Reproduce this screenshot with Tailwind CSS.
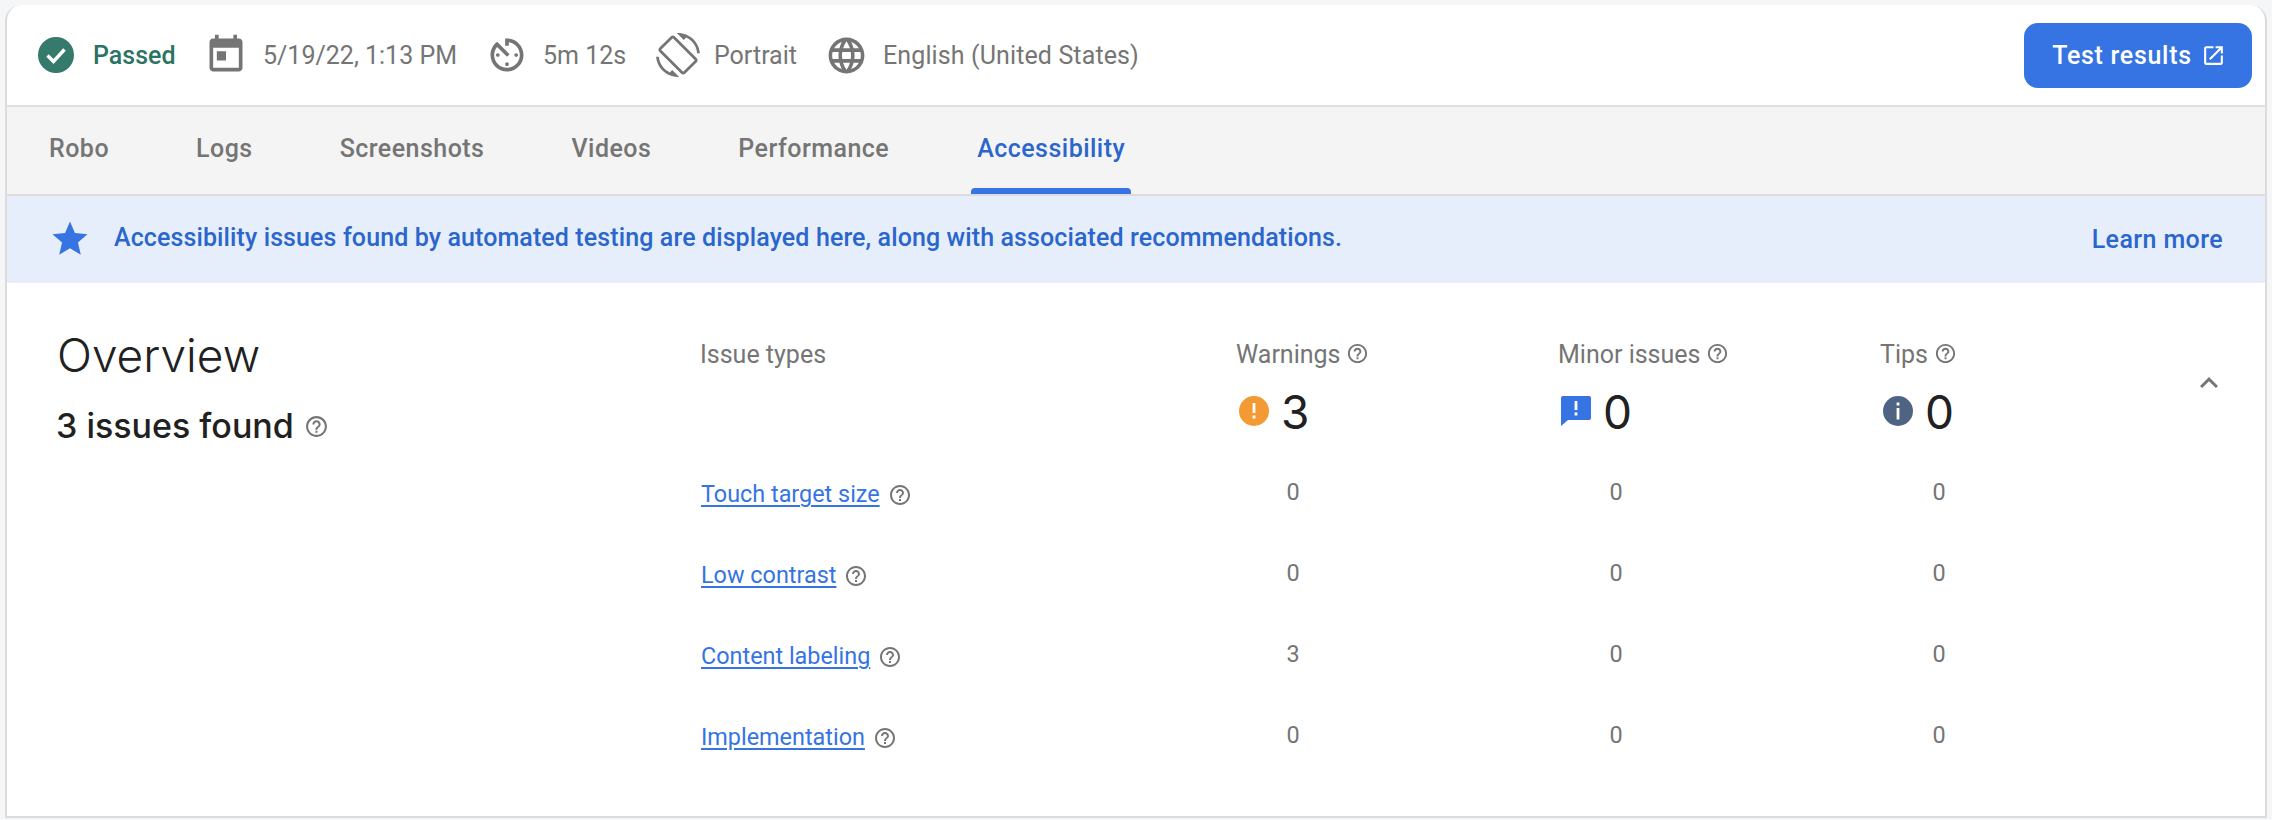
<!DOCTYPE html>
<html lang="en">
<head>
  <meta charset="UTF-8" />
  <title>Accessibility</title>
  <script src="https://cdn.jsdelivr.net/npm/@tailwindcss/browser@4"></script>
</head>
<body class="h-[820px] overflow-hidden bg-[#f5f6f7] px-[5px] pt-[5px] font-['Roboto',sans-serif] text-[#757575]">
  <svg class="hidden">
    <symbol id="help" viewBox="0 0 24 24"><path d="M11 18h2v-2h-2v2zm1-16C6.48 2 2 6.48 2 12s4.48 10 10 10 10-4.48 10-10S17.52 2 12 2zm0 18c-4.41 0-8-3.59-8-8s3.59-8 8-8 8 3.59 8 8-3.59 8-8 8zm0-14c-2.21 0-4 1.79-4 4h2c0-1.1.9-2 2-2s2 .9 2 2c0 2-3 1.75-3 5h2c0-2.25 3-2.5 3-5 0-2.21-1.79-4-4-4z"/></symbol>
  </svg>

  <div class="h-[813px] rounded-t-[16px] bg-white border-x-2 border-b-2 border-[#dcdcdc] border-t-0 overflow-hidden">
    <!-- header -->
    <div class="h-[102px] flex items-center pl-[31px] pr-[13px] border-b-2 border-[#e0e0e0] text-[25px]">
      <svg class="w-[36px] h-[36px] mr-[19px]" viewBox="0 0 36 36"><circle cx="18" cy="18" r="18" fill="#357a6a"/><path d="M9.5 18.5l6 6 11-12" fill="none" stroke="#fff" stroke-width="3.4"/></svg>
      <span class="pt-[2px] font-medium text-[#2b7363] w-[81px]">Passed</span>
      <svg class="w-[44px] h-[44px] ml-[30px] mr-[15px] fill-[#757575]" viewBox="0 0 24 24"><path d="M19 3h-1V1h-2v2H8V1H6v2H5c-1.11 0-1.99.9-1.99 2L3 19c0 1.1.89 2 2 2h14c1.1 0 2-.9 2-2V5c0-1.1-.9-2-2-2zm0 16H5V8h14v11zM7 10h5v5H7z"/></svg>
      <span class="pt-[2px] w-[193px] whitespace-nowrap">5/19/22, 1:13 PM</span>
      <svg class="w-[44px] h-[44px] ml-[29px] mr-[14px] fill-[#757575]" viewBox="0 0 24 24"><path d="M11 17c0 .55.45 1 1 1s1-.45 1-1-.45-1-1-1-1 .45-1 1zm0-14v4h2V5.08c3.39.49 6 3.39 6 6.92 0 3.87-3.13 7-7 7s-7-3.13-7-7c0-1.68.59-3.22 1.58-4.4L12 13l1.41-1.41-6.8-6.8v.02C4.42 6.45 3 9.05 3 12c0 4.97 4.02 9 9 9 4.97 0 9-4.03 9-9s-4.03-9-9-9h-1zm7 9c0-.55-.45-1-1-1s-1 .45-1 1 .45 1 1 1 1-.45 1-1zM6 12c0 .55.45 1 1 1s1-.45 1-1-.45-1-1-1-1 .45-1 1z"/></svg>
      <span class="pt-[2px] w-[83px] whitespace-nowrap">5m 12s</span>
      <svg class="w-[44px] h-[44px] ml-[30px] mr-[14px] fill-[#757575]" viewBox="0 0 24 24"><path d="M16.48 2.52c3.27 1.55 5.61 4.72 5.97 8.48h1.5C23.44 4.84 18.29 0 12 0l-.66.03 3.81 3.81 1.33-1.32zm-6.25-.77c-.59-.59-1.54-.59-2.12 0L1.75 8.11c-.59.59-.59 1.54 0 2.12l12.02 12.02c.59.59 1.54.59 2.12 0l6.36-6.36c.59-.59.59-1.54 0-2.12L10.23 1.75zm4.6 19.44L2.81 9.17l6.36-6.36 12.02 12.02-6.36 6.36zm-7.31.29C4.25 19.94 1.91 16.76 1.55 13H.05C.56 19.16 5.71 24 12 24l.66-.03-3.81-3.81-1.33 1.32z"/></svg>
      <span class="pt-[2px] w-[83px]">Portrait</span>
      <svg class="w-[43px] h-[43px] ml-[28px] mr-[15px] fill-[#757575]" viewBox="0 0 24 24"><path d="M11.99 2C6.47 2 2 6.48 2 12s4.47 10 9.99 10C17.52 22 22 17.52 22 12S17.52 2 11.99 2zm6.93 6h-2.95c-.32-1.25-.78-2.45-1.38-3.56 1.84.63 3.37 1.91 4.33 3.56zM12 4.04c.83 1.2 1.48 2.53 1.91 3.96h-3.82c.43-1.43 1.08-2.76 1.91-3.96zM4.26 14C4.1 13.36 4 12.69 4 12s.1-1.36.26-2h3.38c-.08.66-.14 1.32-.14 2 0 .68.06 1.34.14 2H4.26zm.82 2h2.95c.32 1.25.78 2.45 1.38 3.56-1.84-.63-3.37-1.9-4.33-3.56zm2.95-8H5.08c.96-1.66 2.49-2.93 4.33-3.56C8.81 5.55 8.35 6.75 8.03 8zM12 19.96c-.83-1.2-1.48-2.53-1.91-3.96h3.82c-.43 1.43-1.08 2.76-1.91 3.96zM14.34 14H9.66c-.09-.66-.16-1.32-.16-2 0-.68.07-1.35.16-2h4.68c.09.65.16 1.32.16 2 0 .68-.07 1.34-.16 2zm.25 5.56c.6-1.11 1.06-2.31 1.38-3.56h2.95c-.96 1.65-2.49 2.93-4.33 3.56zM16.36 14c.08-.66.14-1.32.14-2 0-.68-.06-1.34-.14-2h3.38c.16.64.26 1.31.26 2s-.1 1.36-.26 2h-3.38z"/></svg>
      <span class="pt-[2px] whitespace-nowrap tracking-[0.12px]">English (United States)</span>
      <a class="ml-auto w-[228px] h-[65px] rounded-[14px] bg-[#3574e2] text-white flex items-center justify-center gap-[9px] pl-[2px] font-medium tracking-[0.7px]">
        <span class="pt-[2px]">Test results</span>
        <svg class="w-[25px] h-[25px] fill-white" viewBox="0 0 24 24"><path d="M19 19H5V5h7V3H5c-1.11 0-2 .9-2 2v14c0 1.1.89 2 2 2h14c1.1 0 2-.9 2-2V12h-2v7zM14 3v2h3.59l-9.83 9.83 1.41 1.41L19 6.41V10h2V3h-7z"/></svg>
      </a>
    </div>

    <!-- tabs -->
    <div class="h-[89px] bg-[#f4f4f4] border-b-2 border-[#dcdcdc] flex pl-[36px] gap-[75px] text-[25px] font-medium tracking-[0.47px]">
      <a class="px-[6px] flex items-center -mt-[4px]">Robo</a>
      <a class="px-[6px] flex items-center -mt-[4px]">Logs</a>
      <a class="px-[6px] flex items-center -mt-[4px]">Screenshots</a>
      <a class="px-[6px] flex items-center -mt-[4px]">Videos</a>
      <a class="px-[6px] flex items-center -mt-[4px]">Performance</a>
      <a class="relative ml-[1px] px-[6px] flex items-center -mt-[4px] text-[#2a66cc]">Accessibility
        <span class="absolute left-0 right-0 bottom-0 h-[6px] rounded-t-[4px] bg-[#3574e2]"></span>
      </a>
    </div>

    <!-- banner -->
    <div class="h-[87px] bg-[#e6eefb] flex items-center pl-[42px] pr-[42px] text-[#2a66cc] font-medium text-[25px]">
      <svg class="w-[42px] h-[42px] fill-[#3574e2] mr-[23px] -mt-[2px]" viewBox="0 0 24 24"><path d="M12 17.27L18.18 21l-1.64-7.03L22 9.24l-7.19-.61L12 2 9.19 8.63 2 9.24l5.46 4.73L5.82 21z"/></svg>
      <span class="-mt-[4px] tracking-[0.11px]">Accessibility issues found by automated testing are displayed here, along with associated recommendations.</span>
      <a class="ml-auto tracking-[0.4px]">Learn more</a>
    </div>

    <!-- overview -->
    <div class="flex pl-[50px] pt-[32px]">
      <div class="w-[643px]">
        <h2 class="mt-[10px] font-['Inter',sans-serif] font-light text-[46px] leading-[60px] text-[#212121]">Overview</h2>
        <div class="mt-[17px] flex items-center gap-[10px] text-[#212121]">
          <span class="-ml-[1px] font-['Inter',sans-serif] font-medium text-[34px] leading-[48px]">3 issues found</span>
          <svg class="w-[25px] h-[25px] fill-[#757575]"><use href="#help"/></svg>
        </div>
      </div>

      <div class="w-[1500px]">
        <div class="pt-[17px] grid grid-cols-[536px_322px_322px_auto] text-[25px]">
          <div class="pt-[4px]">Issue types</div>
          <div class="pt-[7px] flex items-center gap-[6px] h-[39px]">Warnings <svg class="w-[23px] h-[23px] fill-[#757575] -mt-[4px]"><use href="#help"/></svg></div>
          <div class="pt-[7px] flex items-center gap-[6px] h-[39px]">Minor issues <svg class="w-[23px] h-[23px] fill-[#757575] -mt-[4px]"><use href="#help"/></svg></div>
          <div class="pt-[7px] flex items-center gap-[6px] h-[39px]">Tips <svg class="w-[23px] h-[23px] fill-[#757575] -mt-[4px]"><use href="#help"/></svg></div>

          <div></div>
          <div class="flex items-center h-[60px] mt-[9px] text-[#212121] text-[46px] font-['Inter',sans-serif]">
            <svg class="w-[30px] h-[30px] ml-[3px] mr-[12px] -mt-[3px]" viewBox="0 0 30 30"><circle cx="15" cy="15" r="15" fill="#f39a35"/><path d="M13.6 7h2.8v10h-2.8zM13.6 19.5h2.8v3h-2.8z" fill="#fff"/></svg>3
          </div>
          <div class="flex items-center h-[60px] mt-[9px] text-[#212121] text-[46px] font-['Inter',sans-serif]">
            <svg class="w-[30px] h-[30px] ml-[3px] mr-[12px] -mt-[4px]" viewBox="0 0 30 30"><path d="M2 0h26a2 2 0 0 1 2 2v20a2 2 0 0 1-2 2H7l-7 6V2a2 2 0 0 1 2-2z" fill="#3574e2"/><path d="M13.6 5h2.8v9h-2.8zM13.6 16.5h2.8v3h-2.8z" fill="#fff"/></svg>0
          </div>
          <div class="flex items-center h-[60px] mt-[9px] text-[#212121] text-[46px] font-['Inter',sans-serif]">
            <svg class="w-[30px] h-[30px] ml-[3px] mr-[12px] -mt-[3px]" viewBox="0 0 30 30"><circle cx="15" cy="15" r="15" fill="#4f6482"/><path d="M13.6 6.5h2.8v3h-2.8zM13.6 12h2.8v11.5h-2.8z" fill="#fff"/></svg>0
          </div>
        </div>

        <div class="mt-[12px] pl-[1px] grid grid-cols-[536px_323px_323px_auto] auto-rows-[81px] items-center text-[23.4px]">
          <div class="flex items-center gap-[8px]"><a class="text-[#3574e2] underline underline-offset-[3px]">Touch target size</a><svg class="w-[24px] h-[24px] fill-[#757575]"><use href="#help"/></svg></div>
          <div class="w-[112px] text-center pb-[5px]">0</div><div class="w-[112px] text-center pb-[5px]">0</div><div class="w-[112px] text-center pb-[5px]">0</div>
          <div class="flex items-center gap-[8px]"><a class="text-[#3574e2] underline underline-offset-[3px]">Low contrast</a><svg class="w-[24px] h-[24px] fill-[#757575]"><use href="#help"/></svg></div>
          <div class="w-[112px] text-center pb-[5px]">0</div><div class="w-[112px] text-center pb-[5px]">0</div><div class="w-[112px] text-center pb-[5px]">0</div>
          <div class="flex items-center gap-[8px]"><a class="text-[#3574e2] underline underline-offset-[3px]">Content labeling</a><svg class="w-[24px] h-[24px] fill-[#757575]"><use href="#help"/></svg></div>
          <div class="w-[112px] text-center pb-[5px]">3</div><div class="w-[112px] text-center pb-[5px]">0</div><div class="w-[112px] text-center pb-[5px]">0</div>
          <div class="flex items-center gap-[8px]"><a class="text-[#3574e2] underline underline-offset-[3px]">Implementation</a><svg class="w-[24px] h-[24px] fill-[#757575]"><use href="#help"/></svg></div>
          <div class="w-[112px] text-center pb-[5px]">0</div><div class="w-[112px] text-center pb-[5px]">0</div><div class="w-[112px] text-center pb-[5px]">0</div>
        </div>
      </div>

      <svg class="absolute left-[2191px] top-[365px] w-[36px] h-[36px] fill-[#757575]" viewBox="0 0 24 24"><path d="M12 8l-6 6 1.41 1.41L12 10.83l4.59 4.58L18 14z"/></svg>
    </div>
  </div>
</body>
</html>
